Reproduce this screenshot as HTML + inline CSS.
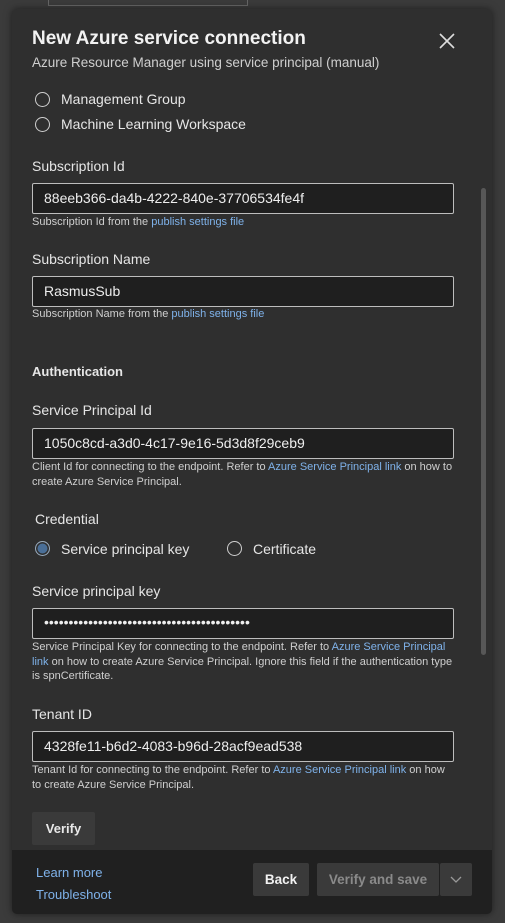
<!DOCTYPE html>
<html><head><style>
*{margin:0;padding:0;box-sizing:border-box}
body{width:505px;height:923px;background:#3b3b3b;font-family:"Segoe UI","Liberation Sans",sans-serif;color:#e8e8e8;position:relative;overflow:hidden}
.dlg{position:absolute;left:12px;top:9px;width:480px;height:905px;background:#2f2f2f;border-radius:5px;box-shadow:0 0 8px rgba(0,0,0,.5);overflow:hidden}
.a{position:absolute;white-space:nowrap}
.lbl{font-size:14px;color:#e6e6e6}
.in{position:absolute;left:20px;width:422px;height:31px;border:1px solid #bdbdbd;background:#1f1f1f;border-radius:2px;font-size:14px;color:#eee;padding:6px 0 0 11px}
.h{font-size:11px;color:#cfcfcf;line-height:14.5px}
.lk{color:#7fb2ea}
.r{position:absolute;width:15px;height:15px;border:1.5px solid #cfcfcf;border-radius:50%}
.foot{position:absolute;left:0;top:841px;width:480px;height:64px;background:#202020}
.btn{position:absolute;background:#3a3a3a;border-radius:2px;font-size:14px;font-weight:bold;text-align:center}
</style></head><body>
<div style="position:absolute;left:48px;top:0;width:200px;height:6px;border:1px solid #666;border-top:none"></div>
<div class="dlg">
<div class="a" style="left:20px;top:19px;font-size:19px;font-weight:bold;color:#f2f2f2">New Azure service connection</div>
<div class="a" style="left:20px;top:46px;font-size:13.5px;color:#cfcfcf">Azure Resource Manager using service principal (manual)</div>
<svg class="a" style="left:427px;top:24px" width="16" height="16"><path d="M1 1L15 15M15 1L1 15" stroke="#ddd" stroke-width="1.6"/></svg>
<div class="r" style="left:23px;top:83px"></div><div class="a lbl" style="left:49px;top:82px">Management Group</div>
<div class="r" style="left:23px;top:108px"></div><div class="a lbl" style="left:49px;top:107px">Machine Learning Workspace</div>
<div class="a lbl" style="left:20px;top:149px">Subscription Id</div>
<div class="in" style="top:174px">88eeb366-da4b-4222-840e-37706534fe4f</div>
<div class="a h" style="left:20px;top:206px">Subscription Id from the <span class="lk">publish settings file</span></div>
<div class="a lbl" style="left:20px;top:242px">Subscription Name</div>
<div class="in" style="top:267px">RasmusSub</div>
<div class="a h" style="left:20px;top:298px">Subscription Name from the <span class="lk">publish settings file</span></div>
<div class="a lbl" style="left:20px;top:355px;font-weight:bold;font-size:13px">Authentication</div>
<div class="a lbl" style="left:20px;top:393px">Service Principal Id</div>
<div class="in" style="top:419px">1050c8cd-a3d0-4c17-9e16-5d3d8f29ceb9</div>
<div class="a h" style="left:20px;top:451px">Client Id for connecting to the endpoint. Refer to <span class="lk">Azure Service Principal link</span> on how to<br>create Azure Service Principal.</div>
<div class="a lbl" style="left:23px;top:502px">Credential</div>
<div class="r" style="left:23px;top:532px;border-color:#9ab;background:#4a6f98;box-shadow:inset 0 0 0 1.5px #2f2f2f"></div><div class="a lbl" style="left:49px;top:532px">Service principal key</div>
<div class="r" style="left:215px;top:532px"></div><div class="a lbl" style="left:241px;top:532px">Certificate</div>
<div class="a lbl" style="left:20px;top:574px">Service principal key</div>
<div class="in" style="top:599px;font-size:14px;padding-top:5px;letter-spacing:0px">••••••••••••••••••••••••••••••••••••••••••</div>
<div class="a h" style="left:20px;top:631px">Service Principal Key for connecting to the endpoint. Refer to <span class="lk">Azure Service Principal</span><br><span class="lk">link</span> on how to create Azure Service Principal. Ignore this field if the authentication type<br>is spnCertificate.</div>
<div class="a lbl" style="left:20px;top:697px">Tenant ID</div>
<div class="in" style="top:722px">4328fe11-b6d2-4083-b96d-28acf9ead538</div>
<div class="a h" style="left:20px;top:754px">Tenant Id for connecting to the endpoint. Refer to <span class="lk">Azure Service Principal link</span> on how<br>to create Azure Service Principal.</div>
<div class="btn" style="left:20px;top:803px;width:63px;height:33px;line-height:33px;font-size:13px">Verify</div>
<div style="position:absolute;left:469px;top:179px;width:5px;height:467px;background:#575757;border-radius:3px"></div>
<div class="foot">
<div class="a" style="left:24px;top:15px;font-size:13px;color:#7fb2ea">Learn more</div>
<div class="a" style="left:24px;top:37px;font-size:13px;color:#7fb2ea">Troubleshoot</div>
<div class="btn" style="left:241px;top:13px;width:56px;height:33px;line-height:33px;color:#f2f2f2;font-size:13.5px">Back</div>
<div class="btn" style="left:305px;top:13px;width:122px;height:33px;line-height:33px;color:#8a8a8a;font-size:13.5px">Verify and save</div>
<div class="btn" style="left:428px;top:13px;width:32px;height:33px"><svg width="14" height="33"><path d="M2 14L7 19L12 14" stroke="#999" fill="none" stroke-width="1.3"/></svg></div>
</div>
</div>
</body></html>
